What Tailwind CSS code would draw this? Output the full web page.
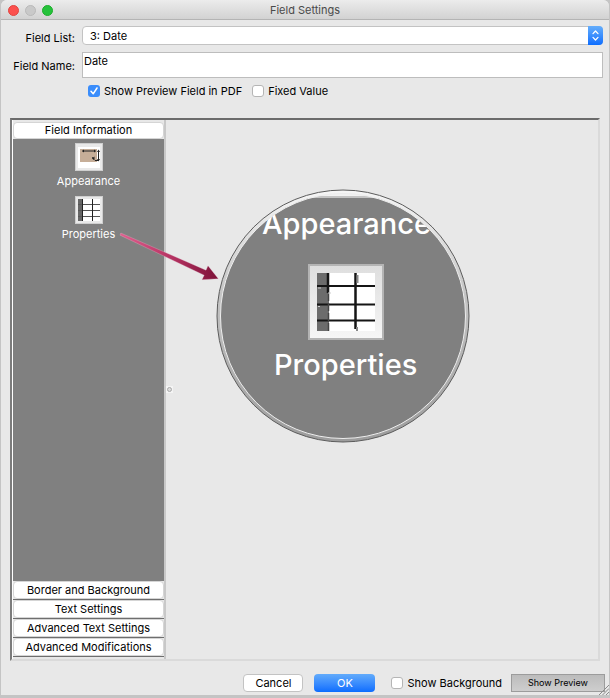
<!DOCTYPE html>
<html lang="en">
<head>
  <meta charset="UTF-8" />
  <meta name="viewport" content="width=device-width, initial-scale=1" />
  <title>Field Settings</title>
  <script src="https://cdn.jsdelivr.net/npm/@tailwindcss/browser@4"></script>
</head>
<body class="bg-[#c4c4c4] text-black font-['Inter','Liberation_Sans',sans-serif] text-[11px] leading-4">
  <div class="min-h-screen flex flex-col pl-px pr-px pb-[3px]">
    <div class="flex-1 flex flex-col bg-[#e8e8e8] rounded-t-md overflow-hidden">

      <!-- Title bar -->
      <header class="relative h-5 flex items-center justify-center border-b border-[#b4b4b4] bg-linear-to-b from-[#ececec] to-[#d2d2d2]">
        <div class="absolute left-[7px] top-[5px] flex gap-[6px]">
          <button aria-label="Close" class="size-[11px] rounded-full bg-[#fc504d] border border-[#e0443f]"></button>
          <button aria-label="Minimize" class="size-[11px] rounded-full bg-[#c9c9c9] border border-[#b9b9b9]"></button>
          <button aria-label="Zoom" class="size-[11px] rounded-full bg-[#26c23c] border border-[#1dad2b]"></button>
        </div>
        <h1 class="text-[#4a4a4a] pt-px">Field Settings</h1>
      </header>

      <!-- Field form -->
      <form id="fieldForm" class="grid grid-cols-[74px_1fr] gap-x-[7px] gap-y-[6px] pt-[6px] pr-[6px]">
        <label for="fieldList" class="text-right pt-1">Field List:</label>
        <div class="relative">
          <select id="fieldList" class="appearance-none block w-full h-[19px] pl-[7px] bg-white border border-[#c3c3c3] rounded-[4px] leading-4">
            <option>3: Date</option>
          </select>
          <span class="pointer-events-none absolute right-0 top-0 w-[15px] h-[19px] rounded-r-[4px] bg-linear-to-b from-[#64adfb] to-[#0a6dfe] flex items-center justify-center">
            <svg class="w-[7px] h-[11px]" viewBox="0 0 7 11" fill="none" stroke="#fff" stroke-width="1.3" stroke-linecap="round" stroke-linejoin="round">
              <path d="M1 3.6 3.5 1 6 3.6M1 7.4 3.5 10 6 7.4" />
            </svg>
          </span>
        </div>

        <label for="fieldName" class="text-right pt-[6px]">Field Name:</label>
        <textarea id="fieldName" rows="1" class="block w-full h-[26px] px-px bg-white border border-[#bdbdbd] resize-none leading-4 overflow-hidden">Date</textarea>

        <div class="col-start-2 flex items-center gap-[10px] pl-[6px] -mt-px">
          <label class="flex items-center gap-1 whitespace-nowrap">
            <span class="relative size-3 flex">
              <input type="checkbox" checked class="appearance-none size-3 rounded-[3px] bg-[#3a8dfb]" />
              <svg class="pointer-events-none absolute inset-0 size-3" viewBox="0 0 12 12" fill="none" stroke="#fff" stroke-width="1.5" stroke-linecap="round" stroke-linejoin="round">
                <path d="M3 6.3 5.2 8.8 9 3" />
              </svg>
            </span>
            Show Preview Field in PDF
          </label>
          <label class="flex items-center gap-1 whitespace-nowrap">
            <input type="checkbox" class="appearance-none size-3 rounded-[3px] bg-white border border-[#b5b5b5]" />
            Fixed Value
          </label>
        </div>
      </form>

      <!-- Settings panel -->
      <main class="relative flex-1 flex mt-[19px] mx-[9px] border-2 border-t-[#6b6b6b] border-l-[#7c7c7c] border-r-[#dadada] border-b-[#dadada]">
        <nav class="w-[154px] flex flex-col pt-px pb-[2px] bg-[#e8e8e8] border-l border-l-white border-r-2 border-r-[#c8c8c8]">
          <button class="h-[17px] mt-px bg-white rounded-[4px] border border-[#d5d5d5] leading-[15px]">Field Information</button>
          <div class="flex-1 flex flex-col items-center gap-[7px] pt-1 bg-[#808080] text-white">
            <button class="flex flex-col items-center">
              <svg class="size-7" viewBox="0 0 28 28">
                <path fill="#cfcfcf" d="M0 0h28v28H0z" />
                <path fill="#e9e9e9" d="M1 1h26v26H1z" />
                <path fill="#fff" d="M3 4h22v21H3z" />
                <path fill="#c6ae98" d="M5 6h17v13H5z" />
                <path d="M7.500 8h13M23.500 8v9M19 15.500l-2-1M20 17.500h4" stroke="#222" stroke-width="1" />
                <path fill="#222" d="M7 8l2-1.500v3zM21 8l-2-1.500v3zM23.500 6.500l1.500 2.500h-3zM23.500 18.500l-1.500-2.500h3zM17 15.500l2.500-2v4z" />
              </svg>
              <span class="mt-[2px]">Appearance</span>
            </button>
            <button class="flex flex-col items-center">
              <svg class="size-7" viewBox="0 0 28 28">
                <path fill="#cfcfcf" d="M0 0h28v28H0z" />
                <path fill="#e9e9e9" d="M1 1h26v26H1z" />
                <path fill="#fff" d="M3 3h22v22H3z" />
                <path fill="#666" d="M3 3h5v22H3z" />
                <path d="M3 8.500h22M3 14.500h22M3 20.500h22" stroke="#555" stroke-width="1" />
                <path d="M7.500 3v22M17.500 3v22" stroke="#222" stroke-width="1" />
              </svg>
              <span class="mt-[2px]">Properties</span>
            </button>
          </div>
          <button class="h-[18px] bg-white rounded-[4px] border border-[#d5d5d5] leading-4">Border and Background</button>
          <div class="h-px bg-[#6e6e6e]"></div>
          <button class="h-[18px] bg-white rounded-[4px] border border-[#d5d5d5] leading-4">Text Settings</button>
          <div class="h-px bg-[#6e6e6e]"></div>
          <button class="h-[18px] bg-white rounded-[4px] border border-[#d5d5d5] leading-4">Advanced Text Settings</button>
          <div class="h-px bg-[#6e6e6e]"></div>
          <button class="h-[18px] bg-white rounded-[4px] border border-[#d5d5d5] leading-4">Advanced Modifications</button>
          <div class="h-px bg-[#6e6e6e]"></div>
        </nav>

        <!-- Splitter handle -->
        <div class="self-center size-[7px] bg-[#f4f4f4] flex items-center justify-center">
          <svg class="size-[5px]" viewBox="0 0 5 5" fill="#dcdcdc" stroke="#a8a8a8"><circle cx="2.5" cy="2.5" r="2" /></svg>
        </div>

        <!-- Arrow to the magnified view -->
        <svg class="absolute left-[107px] top-[112px] w-[102px] h-[52px]" viewBox="119 232 102 52">
          <defs>
            <linearGradient id="arrow" x1="0" x2="1" y1="0" y2="0">
              <stop offset="0" stop-color="#e0608f" />
              <stop offset="0.500" stop-color="#b83464" />
              <stop offset="1" stop-color="#7d1238" />
            </linearGradient>
          </defs>
          <path fill="url(#arrow)" stroke="#e4c3cf" stroke-width="0.300" d="M120.800 233 206 270.200 208 265.700 218.300 278.700 202 279.700 204.200 275.200 120 235.200z" />
        </svg>

        <!-- Magnified view -->
        <svg class="absolute left-[204px] top-[69px] size-[254px]" viewBox="216 189 254 254" font-family="Inter, 'Liberation Sans', sans-serif">
          <defs>
            <linearGradient id="rim" x1="0" x2="0" y1="0" y2="1">
              <stop offset="0" stop-color="#f6f6f6" />
              <stop offset="0.400" stop-color="#c6c6c6" />
              <stop offset="1" stop-color="#9c9c9c" />
            </linearGradient>
            <linearGradient id="frame" x1="0" x2="0" y1="0" y2="1">
              <stop offset="0" stop-color="#dedede" />
              <stop offset="1" stop-color="#f6f6f6" />
            </linearGradient>
            <clipPath id="lens"><circle cx="343" cy="316" r="122.500" /></clipPath>
          </defs>
          <circle cx="343" cy="316" r="126" fill="url(#rim)" stroke="#5c5c5c" stroke-width="1" />
          <g clip-path="url(#lens)">
            <path fill="#f2f2f2" d="M216 189h254v7H216z" />
            <path fill="#c4c4c4" d="M216 196h254v2H216z" />
            <path fill="#808080" d="M216 198h254v245H216z" />
            <text x="262" y="234" font-size="29" font-weight="500" fill="#fff">Appearance</text>
            <path fill="#b4b4b4" d="M308 264h76v76h-76z" />
            <path fill="url(#frame)" d="M310 266h72v72h-72z" />
            <path fill="#fff" d="M317 273h58v58h-58z" />
            <path fill="#6c6c6c" d="M317 273h12v58h-12z" />
            <path d="M317 286h58M317 304.500h58M317 320.500h58" stroke="#151515" stroke-width="2" />
            <path d="M328 273v20M355.500 273v56" stroke="#151515" stroke-width="2.500" />
            <path d="M328.500 293v38" stroke="#444" stroke-width="1.500" stroke-dasharray="8 2" />
            <path d="M357.500 275v8M357 327v4" stroke="#8a8a8a" stroke-width="2" />
            <path d="M318 288h3M318 306.500h2M328 293h3" stroke="#ccc" stroke-width="1" />
            <text x="274" y="375" font-size="29" font-weight="500" fill="#fff">Properties</text>
          </g>
          <circle cx="343" cy="316" r="122.500" fill="none" stroke="#ededed" stroke-width="1" />
        </svg>
      </main>

      <!-- Footer buttons -->
      <footer class="relative flex items-center justify-end h-[34px] pt-[10px] pr-[4px]">
        <button class="w-[60px] h-[18px] bg-white rounded-[4px] border border-[#c3c3c3] leading-4">Cancel</button>
        <button class="w-[61px] h-[18px] ml-[11px] rounded-[4px] text-white bg-linear-to-b from-[#62abfb] to-[#0a6cfe] leading-4">OK</button>
        <label class="flex items-center gap-1 ml-4 whitespace-nowrap">
          <input type="checkbox" class="appearance-none size-3 rounded-[3px] bg-white border border-[#b5b5b5]" />
          Show Background
        </label>
        <button class="w-[94px] h-[18px] ml-[9px] border border-[#9c9c9c] bg-linear-to-b from-[#bcbcbc] to-[#cecece] text-[9px] leading-4">Show Preview</button>
        <svg class="absolute right-0 bottom-0 size-[10px]" viewBox="0 0 10 10" stroke="#8a8a8a" stroke-width="1">
          <path d="M0 10 10 0M3.500 10 10 3.500M7 10l3-3" />
        </svg>
      </footer>
    </div>
  </div>
</body>
</html>
